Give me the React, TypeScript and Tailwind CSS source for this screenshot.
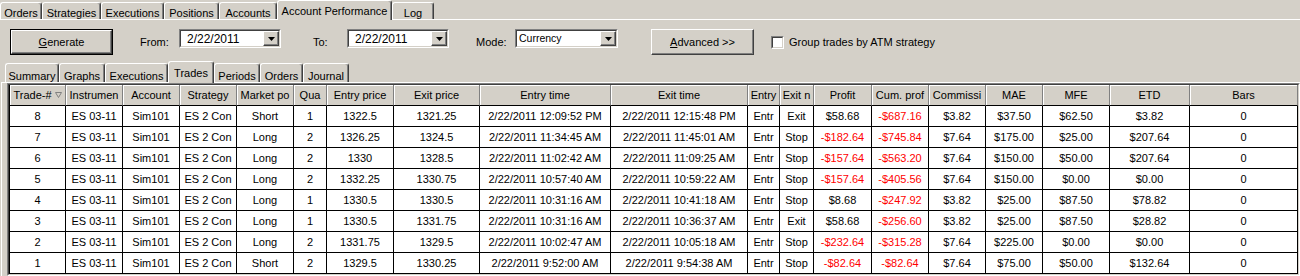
import React from 'react';

const colsClass =
  'grid-cols-[56px_57px_57px_57px_57px_33px_67px_86px_131px_137px_32px_34px_58px_57px_57px_57px_67px_80px_108px]';

const topTabs = [
  { label: 'Orders', w: 'w-[42px]' },
  { label: 'Strategies', w: 'w-[59px]' },
  { label: 'Executions', w: 'w-[63px]' },
  { label: 'Positions', w: 'w-[55px]' },
  { label: 'Accounts', w: 'w-[58px]' },
  { label: 'Account Performance', w: 'w-[115px]', active: true },
  { label: 'Log', w: 'w-[42px]' },
];

const subTabs = [
  { label: 'Summary', w: 'w-[54px]' },
  { label: 'Graphs', w: 'w-[46px]' },
  { label: 'Executions', w: 'w-[63px]' },
  { label: 'Trades', w: 'w-[46px]', active: true },
  { label: 'Periods', w: 'w-[46px]' },
  { label: 'Orders', w: 'w-[43px]' },
  { label: 'Journal', w: 'w-[46px]' },
];

const headers = [
  'Trade-#', 'Instrumen', 'Account', 'Strategy', 'Market po', 'Qua', 'Entry price', 'Exit price',
  'Entry time', 'Exit time', 'Entry', 'Exit n', 'Profit', 'Cum. prof', 'Commissi', 'MAE', 'MFE', 'ETD', 'Bars',
];

const trades: string[][] = [
  ['8', 'ES 03-11', 'Sim101', 'ES 2 Con', 'Short', '1', '1322.5', '1321.25', '2/22/2011 12:09:52 PM', '2/22/2011 12:15:48 PM', 'Entr', 'Exit', '$58.68', '-$687.16', '$3.82', '$37.50', '$62.50', '$3.82', '0'],
  ['7', 'ES 03-11', 'Sim101', 'ES 2 Con', 'Long', '2', '1326.25', '1324.5', '2/22/2011 11:34:45 AM', '2/22/2011 11:45:01 AM', 'Entr', 'Stop', '-$182.64', '-$745.84', '$7.64', '$175.00', '$25.00', '$207.64', '0'],
  ['6', 'ES 03-11', 'Sim101', 'ES 2 Con', 'Long', '2', '1330', '1328.5', '2/22/2011 11:02:42 AM', '2/22/2011 11:09:25 AM', 'Entr', 'Stop', '-$157.64', '-$563.20', '$7.64', '$150.00', '$50.00', '$207.64', '0'],
  ['5', 'ES 03-11', 'Sim101', 'ES 2 Con', 'Long', '2', '1332.25', '1330.75', '2/22/2011 10:57:40 AM', '2/22/2011 10:59:22 AM', 'Entr', 'Stop', '-$157.64', '-$405.56', '$7.64', '$150.00', '$0.00', '$0.00', '0'],
  ['4', 'ES 03-11', 'Sim101', 'ES 2 Con', 'Long', '1', '1330.5', '1330.5', '2/22/2011 10:31:16 AM', '2/22/2011 10:41:18 AM', 'Entr', 'Stop', '$8.68', '-$247.92', '$3.82', '$25.00', '$87.50', '$78.82', '0'],
  ['3', 'ES 03-11', 'Sim101', 'ES 2 Con', 'Long', '1', '1330.5', '1331.75', '2/22/2011 10:31:16 AM', '2/22/2011 10:36:37 AM', 'Entr', 'Exit', '$58.68', '-$256.60', '$3.82', '$25.00', '$87.50', '$28.82', '0'],
  ['2', 'ES 03-11', 'Sim101', 'ES 2 Con', 'Long', '2', '1331.75', '1329.5', '2/22/2011 10:02:47 AM', '2/22/2011 10:05:18 AM', 'Entr', 'Stop', '-$232.64', '-$315.28', '$7.64', '$225.00', '$0.00', '$0.00', '0'],
  ['1', 'ES 03-11', 'Sim101', 'ES 2 Con', 'Short', '2', '1329.5', '1330.25', '2/22/2011 9:52:00 AM', '2/22/2011 9:54:38 AM', 'Entr', 'Stop', '-$82.64', '-$82.64', '$7.64', '$75.00', '$50.00', '$132.64', '0'],
];

const Tab = ({ label, w, active, big }: { label: string; w: string; active?: boolean; big?: boolean }) =>
  active ? (
    <div
      className={`relative z-10 -mb-px flex ${big ? 'h-[20px] pt-[2px]' : 'h-[22px] pt-[3px]'} ${w} shrink-0 justify-center rounded-t-[3px] border-l border-t border-r border-l-white border-t-white border-r-[#404040] bg-[#d4d0c8] shadow-[inset_-1px_0_0_#808080]`}
    >
      {label}
    </div>
  ) : (
    <div
      className={`flex ${big ? 'h-[17px] pt-[2px]' : 'h-[19px] pt-[4px]'} ${w} shrink-0 justify-center rounded-t-[3px] border-l border-t border-r border-l-white border-t-white border-r-[#404040] shadow-[inset_-1px_0_0_#808080]`}
    >
      {label}
    </div>
  );

const Combo = ({ value, w, small }: { value: string; w: string; small?: boolean }) => (
  <div className={`mt-[9px] flex h-[19px] ${w} shrink-0 border border-t-[#808080] border-l-[#808080] border-b-white border-r-white`}>
    <div className="flex flex-1 border border-t-[#404040] border-l-[#404040] border-b-[#d4d0c8] border-r-[#d4d0c8] bg-white">
      <div className={`flex flex-1 items-center ${small ? 'pl-[2px] text-[10.5px]' : 'pl-[6px] text-[12px]'}`}>{value}</div>
      <div className="flex w-[16px] items-center justify-center border border-t-white border-l-white border-b-[#404040] border-r-[#404040] bg-[#d4d0c8] shadow-[inset_-1px_-1px_0_#808080]">
        <svg width="7" height="4" viewBox="0 0 7 4">
          <polygon points="0,0 7,0 3.5,4" fill="#000" />
        </svg>
      </div>
    </div>
  </div>
);

export default function App() {
  return (
    <div className="h-[276px] w-[1300px] overflow-hidden bg-[#d4d0c8] font-['Liberation_Sans',Arial,sans-serif] text-[11px] text-black">
      <div className="relative z-10 flex h-[19px] items-end">
        {topTabs.map((t) => (
          <Tab key={t.label} {...t} big />
        ))}
      </div>

      <div className="border-t border-white">
        <div className="flex h-[41px] items-start">
          <div className="ml-[10px] mt-[9px] flex h-[26px] w-[103px] border border-black">
            <div className="flex flex-1 items-center justify-center border border-t-white border-l-white border-b-[#404040] border-r-[#404040] shadow-[inset_-1px_-1px_0_#808080]">
              <span>
                <span className="underline">G</span>enerate
              </span>
            </div>
          </div>
          <div className="ml-[27px] mt-[9px] flex h-[26px] w-[39px] items-center">From:</div>
          <Combo value="2/22/2011" w="w-[102px]" />
          <div className="ml-[32px] mt-[9px] flex h-[26px] w-[34px] items-center">To:</div>
          <Combo value="2/22/2011" w="w-[102px]" />
          <div className="ml-[27px] mt-[9px] flex h-[26px] w-[39px] items-center">Mode:</div>
          <Combo value="Currency" w="w-[103px]" small />
          <div className="ml-[33px] mt-[9px] flex h-[26px] w-[103px] items-center justify-center border border-t-white border-l-white border-b-[#404040] border-r-[#404040] shadow-[inset_-1px_-1px_0_#808080]">
            <span>
              <span className="underline">A</span>dvanced &gt;&gt;
            </span>
          </div>
          <div className="ml-[17px] mt-[16px] h-[13px] w-[13px] border border-t-[#808080] border-l-[#808080] border-b-white border-r-white">
            <div className="h-full w-full border border-t-[#404040] border-l-[#404040] border-b-[#d4d0c8] border-r-[#d4d0c8] bg-white" />
          </div>
          <div className="ml-[5px] mt-[9px] flex h-[26px] items-center">Group trades by ATM strategy</div>
        </div>

        <div className="relative z-10 flex h-[21px] items-end pl-[5px]">
          {subTabs.map((t) => (
            <Tab key={t.label} {...t} />
          ))}
        </div>

        <div className="ml-[1px] border-l border-t border-white pl-[5px]">
          <div className="border border-t-[#808080] border-l-[#808080] border-b-white border-r-white">
            <div className="border border-t-[#404040] border-l-[#404040] border-b-[#d4d0c8] border-r-[#d4d0c8]">
              <div className={`grid ${colsClass} border-l border-black bg-white`}>
                {headers.map((h, i) => (
                  <div
                    key={h}
                    className="flex h-[21px] items-center justify-center overflow-hidden whitespace-nowrap border-b border-r border-b-black border-r-[#808080] bg-[#d4d0c8] shadow-[inset_1px_1px_0_#fff]"
                  >
                    {h}
                    {i === 0 && (
                      <svg className="ml-[3px]" width="7" height="6" viewBox="0 0 7 6">
                        <polygon points="0.5,0.5 6.5,0.5 3.5,5.5" fill="none" stroke="#808080" />
                      </svg>
                    )}
                  </div>
                ))}
                {trades.map((row) =>
                  row.map((v, i) => (
                    <div
                      key={row[0] + '-' + i}
                      className={`flex h-[21px] items-center justify-center overflow-hidden whitespace-nowrap border-b border-r border-black ${
                        v.startsWith('-') ? 'text-[#ff0000]' : ''
                      }`}
                    >
                      {v}
                    </div>
                  ))
                )}
              </div>
            </div>
          </div>
        </div>
      </div>
    </div>
  );
}
